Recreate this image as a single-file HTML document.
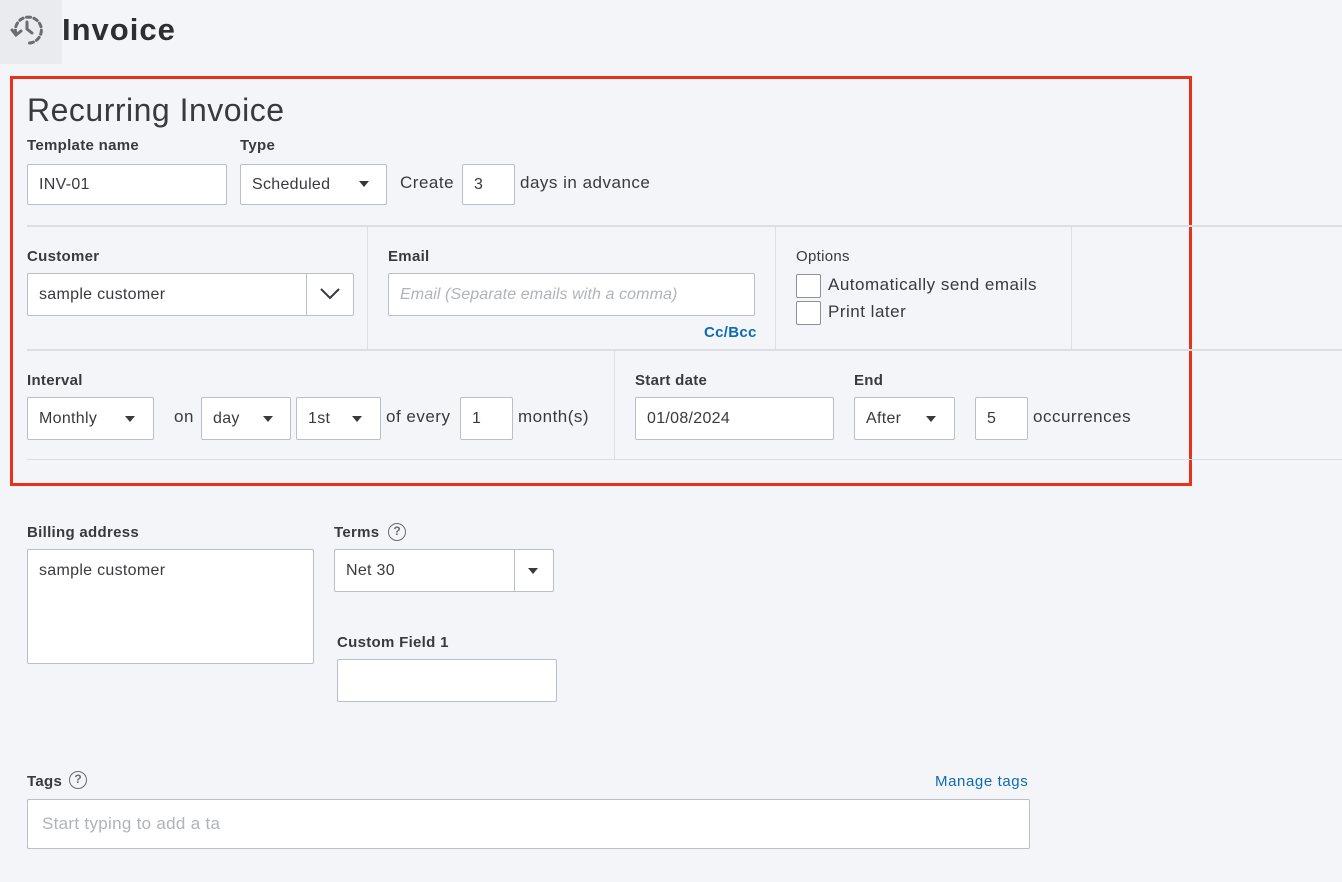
<html><head><style>
body{margin:0;width:1342px;height:882px;background:#f4f5f8;font-family:"Liberation Sans",sans-serif;color:#393a3d;position:relative;overflow:hidden;letter-spacing:0.3px}
.a{position:absolute}
.l{position:absolute;font-size:15px;font-weight:bold;color:#393a3d}
.in{position:absolute;background:#fff;border:1px solid #babec5;border-radius:2px;box-sizing:border-box;font-size:16px;padding-left:11px;display:flex;align-items:center;color:#393a3d}
.t{position:absolute;font-size:17px;color:#393a3d;letter-spacing:0.5px}
.car{position:absolute;width:0;height:0;border-left:5px solid transparent;border-right:5px solid transparent;border-top:6px solid #393a3d}
.h{position:absolute;height:2px;background:#dcdee2}
.v{position:absolute;width:1px;background:#dcdee2}
.cb{position:absolute;width:25px;height:24px;border:1px solid #8d9096;border-radius:2px;background:#fff;box-sizing:border-box}
.q{position:absolute;width:18px;height:18px;border:1.5px solid #6b6c72;border-radius:50%;box-sizing:border-box;font-size:12px;font-weight:bold;color:#6b6c72;text-align:center;line-height:15px;letter-spacing:0}
</style></head><body>
<div class="a" style="left:0;top:0;width:62px;height:64px;background:#eaebee"></div>
<svg class="a" style="left:10px;top:12px" width="38" height="36" viewBox="0 0 38 36"><g fill="none" stroke="#6b6c72" stroke-width="3" stroke-linecap="round"><path d="M6 22 A13 13 0 1 1 17 31" stroke-dasharray="4 3.5"/><path d="M17 10 v7 l5 4"/><path d="M2 18 l4 5 l5 -4"/></g></svg>
<div class="a" style="left:62px;top:12px;font-size:31px;font-weight:bold;color:#2d2e31;letter-spacing:1px">Invoice</div>
<div class="a" style="left:10px;top:76px;width:1176px;height:404px;border:3px solid #e8321c"></div>
<div class="a" style="left:27px;top:92px;font-size:32px;color:#393a3d;letter-spacing:0.5px">Recurring Invoice</div>
<div class="l" style="left:27px;top:137px">Template name</div>
<div class="l" style="left:240px;top:137px">Type</div>
<div class="in" style="left:27px;top:164px;width:200px;height:41px">INV-01</div>
<div class="in" style="left:240px;top:164px;width:147px;height:41px">Scheduled</div><div class="car" style="left:359px;top:181px"></div>
<div class="t" style="left:400px;top:173px">Create</div>
<div class="in" style="left:462px;top:164px;width:53px;height:41px">3</div>
<div class="t" style="left:520px;top:173px">days in advance</div>
<div class="h" style="left:27px;top:225px;width:1315px"></div>
<div class="v" style="left:367px;top:227px;height:123px"></div>
<div class="v" style="left:775px;top:227px;height:123px"></div>
<div class="v" style="left:1071px;top:227px;height:123px"></div>
<div class="l" style="left:27px;top:248px">Customer</div>
<div class="in" style="left:27px;top:273px;width:327px;height:43px">sample customer</div>
<div class="v" style="left:306px;top:274px;height:41px;background:#babec5"></div>
<svg class="a" style="left:319px;top:287px" width="22" height="14"><path d="M2 2 L11 11 L20 2" fill="none" stroke="#393a3d" stroke-width="2"/></svg>
<div class="l" style="left:388px;top:248px">Email</div>
<div class="in" style="left:388px;top:273px;width:367px;height:43px;font-style:italic;color:#b0b3b8;font-size:16px;letter-spacing:0.1px">Email (Separate emails with a comma)</div>
<div class="a" style="left:704px;top:324px;font-size:15px;font-weight:bold;color:#0d6bb5">Cc/Bcc</div>
<div class="a" style="left:796px;top:248px;font-size:15px;color:#393a3d">Options</div>
<div class="cb" style="left:796px;top:274px"></div><div class="t" style="left:828px;top:275px">Automatically send emails</div>
<div class="cb" style="left:796px;top:301px"></div><div class="t" style="left:828px;top:302px">Print later</div>
<div class="h" style="left:27px;top:349px;width:1315px"></div>
<div class="v" style="left:614px;top:351px;height:109px"></div>
<div class="l" style="left:27px;top:372px">Interval</div>
<div class="in" style="left:27px;top:397px;width:127px;height:43px">Monthly</div><div class="car" style="left:125px;top:416px"></div>
<div class="t" style="left:174px;top:407px">on</div>
<div class="in" style="left:201px;top:397px;width:90px;height:43px">day</div><div class="car" style="left:263px;top:416px"></div>
<div class="in" style="left:296px;top:397px;width:85px;height:43px">1st</div><div class="car" style="left:352px;top:416px"></div>
<div class="t" style="left:386px;top:407px">of every</div>
<div class="in" style="left:460px;top:397px;width:53px;height:43px">1</div>
<div class="t" style="left:518px;top:407px">month(s)</div>
<div class="l" style="left:635px;top:372px">Start date</div>
<div class="in" style="left:635px;top:397px;width:199px;height:43px">01/08/2024</div>
<div class="l" style="left:854px;top:372px">End</div>
<div class="in" style="left:854px;top:397px;width:101px;height:43px">After</div><div class="car" style="left:926px;top:416px"></div>
<div class="in" style="left:975px;top:397px;width:53px;height:43px">5</div>
<div class="t" style="left:1033px;top:407px">occurrences</div>
<div class="h" style="left:27px;top:459px;width:1315px;height:1px"></div>
<div class="l" style="left:27px;top:524px">Billing address</div>
<div class="in" style="left:27px;top:549px;width:287px;height:115px;align-items:flex-start;padding-top:12px">sample customer</div>
<div class="l" style="left:334px;top:524px">Terms</div><div class="q" style="left:388px;top:523px">?</div>
<div class="in" style="left:334px;top:549px;width:220px;height:43px">Net 30</div>
<div class="v" style="left:514px;top:550px;height:41px;background:#babec5"></div><div class="car" style="left:528px;top:568px"></div>
<div class="l" style="left:337px;top:634px">Custom Field 1</div>
<div class="in" style="left:337px;top:659px;width:220px;height:43px"></div>
<div class="l" style="left:27px;top:773px">Tags</div><div class="q" style="left:69px;top:771px">?</div>
<div class="a" style="left:935px;top:773px;font-size:15px;color:#0d6bb5;letter-spacing:0.6px">Manage tags</div>
<div class="in" style="left:27px;top:799px;width:1003px;height:50px;color:#b0b3b8;font-size:17px;padding-left:14px">Start typing to add a ta</div>
</body></html>
